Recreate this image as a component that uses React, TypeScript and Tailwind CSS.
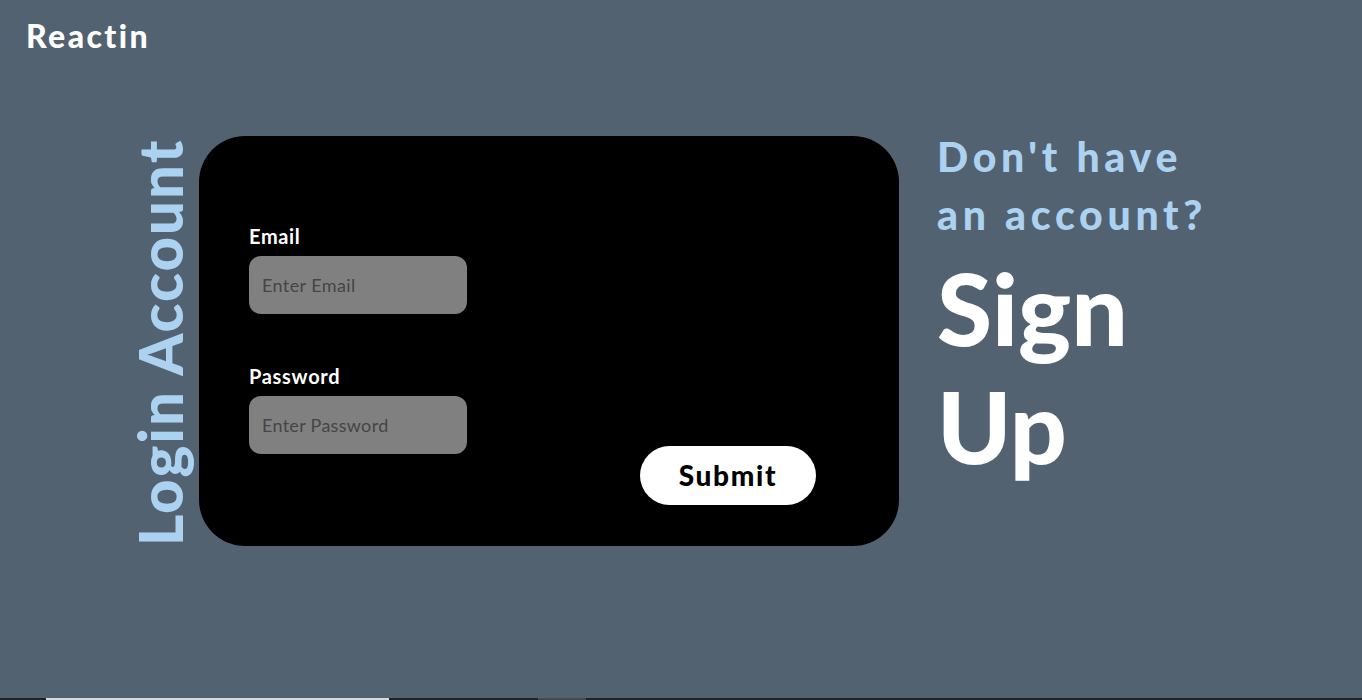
import React from "react";

const font = "font-['Lato','Noto_Sans',sans-serif]";

export default function App() {
  return (
    <div className={`h-screen w-full flex flex-col bg-[#536271] ${font}`}>
      {/* Brand */}
      <div className="pl-[26px] pt-[14px] h-[60px]">
        <span className="text-[32px] font-black text-white leading-[44px] tracking-[2.4px]">Reactin</span>
      </div>

      {/* Main row */}
      <div className="flex flex-row items-start pl-[132px] mt-[76px]">
        <h1 className="h-[410px] w-[56px] rotate-180 [writing-mode:vertical-rl] text-[60px] leading-[56px] font-black text-[#acd2f2] whitespace-nowrap tracking-[2px]">
          Login Account
        </h1>

        <div className="ml-[11px] w-[700px] h-[410px] rounded-[46px] bg-black flex flex-row pl-[50px] pr-[83px] pt-[86px] pb-[41px]">
          <div className="flex flex-col">
            <label className="text-[20px] font-bold text-white leading-[28px] tracking-[0.6px]">Email</label>
            <input
              placeholder="Enter Email"
              className="mt-[6px] w-[218px] h-[58px] rounded-[12px] bg-[#808080] px-[13px] text-[18px] tracking-[0.4px] text-[#333] placeholder:text-[#454545] outline-none"
            />
            <label className="mt-[48px] text-[20px] font-bold text-white leading-[28px] tracking-[0.7px]">Password</label>
            <input
              placeholder="Enter Password"
              className="mt-[6px] w-[218px] h-[58px] rounded-[12px] bg-[#808080] px-[13px] text-[18px] tracking-[0.3px] text-[#333] placeholder:text-[#454545] outline-none"
            />
          </div>
          <button className="ml-auto self-end w-[176px] h-[59px] rounded-full bg-white text-black text-[28px] font-black tracking-[1.7px] pb-[2px]">
            Submit
          </button>
        </div>

        <div className="ml-[38px] -mt-[8px] flex flex-col">
          <h2 className="text-[41px] leading-[58px] font-black text-[#acd2f2] tracking-[4.7px]">
            Don't have
            <br />
            an account?
          </h2>
          <h2 className="mt-[4px] text-[100px] leading-[118px] font-black text-white">
            Sign
            <br />
            Up
          </h2>
        </div>
      </div>

      {/* Bottom strip */}
      <div className="mt-auto h-[2px] w-full bg-[#222] flex flex-row">
        <div className="ml-[46px] w-[343px] bg-[#d8d8d4]" />
        <div className="ml-[149px] w-[48px] bg-[#4a4a4a]" />
      </div>
    </div>
  );
}
